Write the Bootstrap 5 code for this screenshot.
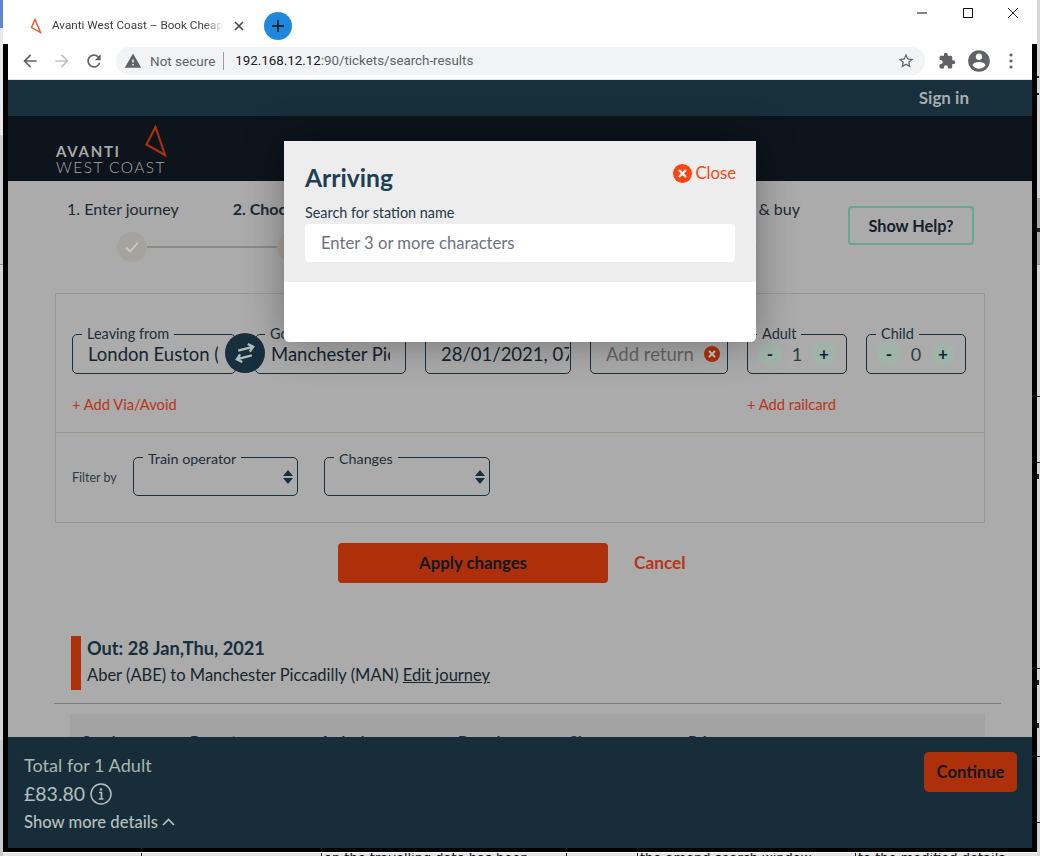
<!DOCTYPE html>
<html lang="en">
<head>
    <meta charset="UTF-8">
    <title>Avanti West Coast – Book Cheap Train Tickets</title>
    <link href="https://cdn.jsdelivr.net/npm/bootstrap@5.3.2/dist/css/bootstrap.min.css" rel="stylesheet">
    <style>
        html, body { height: 856px; overflow: hidden; }
        body { background: #d6d6d6; font-family: Lato, "Open Sans", sans-serif; color: #17303d; }
        .strip { width: 3px; height: 856px; flex: none; display: block; }
        .desk { width: 1040px; height: 856px; }
        .win-col { width: 1034px; flex: none; }
        .win { height: 853px; background: #fff; }

        /* browser chrome */
        .tabstrip { height: 44px; padding-top: 8px; font-family: Roboto, sans-serif; }
        .fav { margin-left: 27px; }
        .tab-title { width: 172px; margin-left: 10px; font-size: 11.7px; color: #3c4043; white-space: nowrap; overflow: hidden;
            -webkit-mask-image: linear-gradient(90deg, #000 88%, transparent); mask-image: linear-gradient(90deg, #000 88%, transparent); }
        .tab-x { margin-left: 10px; }
        .newtab { width: 28px; height: 28px; border-radius: 50%; background: #1e88dc; margin-left: 20px; }
        .winbtns { margin-left: auto; margin-right: 1px; align-self: flex-start; }
        .winbtn { width: 45.5px; text-align: center; line-height: 0; }
        .frame { height: 808px; border: solid #000; border-width: 0 5px 4px 5px; }
        .toolbar { height: 36px; padding: 0 5px 1px 6px; border-bottom: 1px solid #e3e5e8; font-family: Roboto, sans-serif; }
        .tool { width: 32px; flex: none; text-align: center; line-height: 0; }
        .omni { height: 28px; flex: 1; margin: 0 6px; background: #f1f3f4; border-radius: 14px; padding: 0 10px 0 8px; font-size: 13.5px; color: #5f6368; }
        .omni-sep { width: 1px; height: 18px; background: #9aa0a6; margin: 0 11px 0 8px; }
        .url-text { font-size: 13.33px; }
        .url-host { color: #202124; }

        /* page */
        .page { height: 768px; position: relative; overflow: hidden; background: #ababab; }
        .topbar { height: 36px; background: #182f3c; padding-right: 63px; color: #a7adaf; font-weight: 700; font-size: 17px; }
        .brandbar { height: 65px; background: #0d141b; padding-left: 48px; }
        .logo { position: relative; width: 112px; color: #a9a9a9; line-height: 16px; padding-top: 27px; }
        .logo-a { font-weight: 700; font-size: 15px; letter-spacing: 1.7px; }
        .logo-w { font-weight: 300; font-size: 15.5px; letter-spacing: 1.45px; white-space: nowrap; }
        .logo svg { position: absolute; left: 88px; top: 8px; }
        .main { height: 556px; overflow: hidden; padding: 17px 47px 0; }

        .steps { padding: 0 11px 0 12px; }
        .steps-l { width: 733px; }
        .step-labels { font-size: 16px; line-height: 22px; color: #1b2a33; }
        .step-now { font-weight: 700; margin-left: 54px; white-space: nowrap; }
        .step-buy { margin-left: auto; white-space: nowrap; }
        .track { margin: 12px 43px 0 50px; height: 30px; }
        .dot { width: 30px; height: 30px; border-radius: 50%; background: #a6a29d; flex: none; }
        .rail { height: 2px; background: #8f8a85; flex: 1; }
        .rail-a { flex: none; width: 130px; }
        .btn.helpbtn { width: 126px; height: 39px; margin: 8px 0 0 48px; padding: 1px 0 0; border: 2px solid #6aa58f; border-radius: 4px; font-weight: 700; font-size: 16.3px; color: #14222b; background: transparent; }

        .searchbox { border: 1px solid #989890; margin-top: 31px; height: 230px; }
        .sec-a { height: 139px; padding: 32px 16px 0; border-bottom: 1px solid #989890; }
        .sec-b { padding: 14px 16px 0; }
        .fieldrow { position: relative; gap: 19px; height: 48px; }
        .fld { border: 1px solid #17303d; border-radius: 5px; margin: 0; padding: 0; height: 48px; min-width: 0; flex: none; }
        .fld legend { float: none; width: auto; margin: 0 0 0 9px; padding: 0 5px; font-size: 14.5px; line-height: 16px; color: #1b2f3b; }
        .fld-val { font-size: 18.5px; line-height: 24px; padding-left: 15px; white-space: nowrap; overflow: hidden; color: #14252f; }
        .w-from { width: 164px; } .w-to { width: 151px; } .w-date { width: 146px; } .w-ret { width: 138px; } .w-pax { width: 100px; }
        .w-from .fld-val { margin-right: 17px; }
        .w-to .fld-val { margin-right: 15px; }
        .w-date .fld-val { margin-right: 1px; }
        .w-ret .fld-val { color: #666; padding-right: 7px; }
        .swap { position: absolute; left: 153px; top: 7px; width: 40px; height: 40px; border-radius: 50%; background: #18303d; }
        .pax { height: 24px; padding: 0 10px; }
        .pax-btn { width: 24px; height: 24px; border-radius: 50%; background: #a0b4a9; font-weight: 700; font-size: 17px; line-height: 23px; text-align: center; color: #14252f; }
        .pax-n { font-size: 18px; color: #2a3d47; }
        .addlink { font-size: 14.7px; line-height: 20px; color: #b9351a; margin-top: 20px; }
        .add-via { width: 675px; flex: none; }
        .filter-l { width: 61px; font-size: 12.5px; color: #2a3d47; padding-top: 22px; }
        .fld-sel { width: 165px; height: 49px; }
        .fld-sel legend { padding-top: 4px; font-size: 14.3px; }
        .fld-sel + .fld-sel { width: 166px; margin-left: 26px; }
        .sel-in { height: 20px; padding-right: 4px; }

        .applyrow { margin: 20px 0 0 283px; }
        .btn.applybtn { width: 270px; height: 40px; padding: 0; background: #ad300b; border: 0; border-radius: 4px; font-weight: 700; font-size: 16.8px; color: #13181c; }
        .cancel { margin-left: 26px; font-weight: 700; font-size: 17.3px; color: #b9351a; }
        .outrow { margin: 53px 0 0 16px; height: 54px; }
        .outbar { width: 10px; background: #ad300b; margin-right: 6px; }
        .out-h { font-size: 18.2px; font-weight: 700; line-height: 24px; color: #17303d; }
        .out-s { font-size: 16.5px; line-height: 24px; margin-top: 3px; color: #15262f; }
        .out-s a { color: inherit; }
        .rule { height: 1px; background: #7d7d7d; margin: 13px -16px 0 -1px; }
        .fares { margin: 10px 0 0 15px; background: #a3a3a3; padding: 17px 0 0 12px; height: 60px; font-size: 15px; font-weight: 700; line-height: 20px; color: #17303d; }
        .fares span:nth-child(1) { width: 108px; } .fares span:nth-child(2) { width: 130px; } .fares span:nth-child(3) { width: 138px; }
        .fares span:nth-child(4) { width: 110px; } .fares span:nth-child(5) { width: 120px; }

        .totalbar { height: 111px; background: #172d3a; padding: 15px 15px 0 16px; }
        .t-a { font-size: 18.1px; line-height: 26px; color: #a8b8ac; margin-top: 0; }
        .t-b { font-size: 19.5px; line-height: 28px; color: #b6bfbe; margin-top: 2px; gap: 5px; }
        .t-c { font-size: 16.6px; line-height: 24px; color: #b6c0bd; font-weight: 500; margin-top: 2px; }
        .btn.contbtn { width: 93px; height: 40px; padding: 0; background: #ad300b; border: 0; border-radius: 5px; font-weight: 700; font-size: 16.6px; color: #13181c; }

        /* modal */
        .stn-modal { position: absolute; left: 276px; top: 61px; width: 472px; height: 201px; background: #fff; border-radius: 0 0 5px 5px; box-shadow: 0 0 40px rgba(0,0,0,.35); overflow: hidden; }
        .stn-head { background: #ededed; height: 141px; padding: 22px 20px 0 21px; }
        .stn-title { font-size: 24.7px; font-weight: 700; line-height: 30px; color: #1c3f55; }
        .stn-close { font-size: 16.7px; color: #fb4414; line-height: 20px; gap: 3px; margin-right: 0; }
        .stn-label { font-size: 14.4px; line-height: 18px; margin-top: 11px; color: #1f3a4a; }
        .form-control.stn-input { height: 38px; margin-top: 2px; width: 430px; border: 0; border-radius: 3px; padding: 0 16px 1px; font-size: 16.6px; font-family: Lato, sans-serif; }
        .stn-input::placeholder { color: #6c7280; opacity: 1; }

        /* window behind */
        .behind { height: 3px; overflow: hidden; padding-left: 138px; font: 13px/9px "DejaVu Sans", sans-serif; color: #111; white-space: nowrap; background: #e4e4e4; }
        .cell { border-left: 1px solid #222; height: 3px; padding-left: 2px; flex: none; }
        .c-a { width: 180px; } .c-b { width: 245px; } .c-c { width: 71px; } .c-d { width: 218px; } .c-e { width: 180px; }
    </style>
</head>
<body class="m-0">
<div class="desk d-flex">
    <svg class="strip" viewBox="0 0 3 856">
        <rect width="3" height="28" fill="#5f83d9"/><rect y="28" width="3" height="107" fill="#e8e8e8"/>
        <rect y="135" width="3" height="129" fill="#cfcfcf"/><rect y="264" width="3" height="1" fill="#5cb85c"/>
        <rect y="740" width="3" height="116" fill="#c9c9c9"/>
    </svg>
    <div class="win-col">
        <div class="win">
            <div class="tabstrip d-flex align-items-center">
                <svg class="fav" width="12" height="16" viewBox="0 0 12 16"><path d="M5 1.5 10.5 14.5 1.5 9.5Z" fill="none" stroke="#f0502a" stroke-width="1.4"/></svg>
                <div class="tab-title">Avanti West Coast – Book Cheap Train Tickets</div>
                <svg class="tab-x" width="10" height="10" viewBox="0 0 10 10"><path d="M1 1 9 9M9 1 1 9" stroke="#45494d" stroke-width="1.6"/></svg>
                <div class="newtab d-flex align-items-center justify-content-center">
                    <svg width="14" height="14" viewBox="0 0 14 14"><path d="M7 1V13M1 7H13" stroke="#16242e" stroke-width="1.8"/></svg>
                </div>
                <div class="winbtns d-flex">
                    <div class="winbtn"><svg width="10" height="10" viewBox="0 0 10 10"><path d="M0 5H10" stroke="#111"/></svg></div>
                    <div class="winbtn"><svg width="10" height="10" viewBox="0 0 10 10"><rect x=".5" y=".5" width="9" height="9" fill="none" stroke="#111"/></svg></div>
                    <div class="winbtn"><svg width="10" height="10" viewBox="0 0 10 10"><path d="M0 0 10 10M10 0 0 10" stroke="#111" stroke-width=".9"/></svg></div>
                </div>
            </div>
            <div class="frame">
                <div class="toolbar d-flex align-items-center">
                    <div class="tool"><svg width="20" height="20" viewBox="0 0 24 24" fill="#5f6368"><path d="M20 11H7.8l5.6-5.6L12 4l-8 8 8 8 1.4-1.4L7.8 13H20z"/></svg></div>
                    <div class="tool"><svg width="20" height="20" viewBox="0 0 24 24" fill="#bdc1c6"><path d="M4 11h12.2l-5.6-5.6L12 4l8 8-8 8-1.4-1.4 5.6-5.6H4z"/></svg></div>
                    <div class="tool"><svg width="20" height="20" viewBox="0 0 24 24" fill="#5f6368"><path d="M17.65 6.35A7.958 7.958 0 0 0 12 4c-4.42 0-7.99 3.58-7.99 8s3.57 8 7.99 8c3.73 0 6.84-2.55 7.73-6h-2.08A5.99 5.99 0 0 1 12 18c-3.31 0-6-2.69-6-6s2.69-6 6-6c1.66 0 3.14.69 4.22 1.78L13 11h7V4l-2.35 2.35z"/></svg></div>
                    <div class="omni d-flex align-items-center">
                        <svg class="me-2" width="18" height="18" viewBox="0 0 24 24" fill="#5f6368"><path d="M1 21h22L12 2 1 21zm12-3h-2v-2h2v2zm0-4h-2v-4h2v4z"/></svg>
                        <span>Not secure</span><span class="omni-sep"></span>
                        <span class="url-text"><span class="url-host">192.168.12.12</span>:90/tickets/search-results</span>
                        <svg class="ms-auto" width="18" height="18" viewBox="0 0 24 24" fill="#5f6368"><path d="M22 9.24l-7.19-.62L12 2 9.19 8.63 2 9.24l5.46 4.73L5.82 21 12 17.27 18.18 21l-1.63-7.03L22 9.24zM12 15.4l-3.76 2.27 1-4.28-3.32-2.88 4.38-.38L12 6.1l1.71 4.04 4.38.38-3.32 2.88 1 4.28L12 15.4z"/></svg>
                    </div>
                    <div class="tool"><svg width="18" height="18" viewBox="0 0 24 24" fill="#5f6368"><path d="M20.5 11H19V7c0-1.1-.9-2-2-2h-4V3.5C13 2.12 11.88 1 10.5 1S8 2.12 8 3.5V5H4c-1.1 0-1.99.9-1.99 2v3.8H3.5c1.49 0 2.7 1.21 2.7 2.7s-1.21 2.7-2.7 2.7H2V20c0 1.1.9 2 2 2h3.8v-1.5c0-1.49 1.21-2.7 2.7-2.7 1.49 0 2.7 1.21 2.7 2.7V22H17c1.1 0 2-.9 2-2v-4h1.5c1.38 0 2.5-1.12 2.5-2.5S21.88 11 20.5 11z"/></svg></div>
                    <div class="tool"><svg width="26" height="26" viewBox="0 0 24 24" fill="#5f6368"><path d="M12 2C6.48 2 2 6.48 2 12s4.48 10 10 10 10-4.48 10-10S17.52 2 12 2zm0 3c1.66 0 3 1.34 3 3s-1.34 3-3 3-3-1.34-3-3 1.34-3 3-3zm0 14.2c-2.5 0-4.71-1.28-6-3.22.03-1.99 4-3.08 6-3.08 1.99 0 5.97 1.09 6 3.08-1.29 1.94-3.5 3.22-6 3.22z"/></svg></div>
                    <div class="tool"><svg width="4" height="16" viewBox="0 0 4 16" fill="#5f6368"><circle cx="2" cy="2" r="1.6"/><circle cx="2" cy="8" r="1.6"/><circle cx="2" cy="14" r="1.6"/></svg></div>
                </div>

                <div class="page">
                    <div class="topbar d-flex align-items-center justify-content-end">Sign in</div>
                    <div class="brandbar">
                        <div class="logo">
                            <div class="logo-a">AVANTI</div>
                            <div class="logo-w">WEST COAST</div>
                            <svg width="24" height="34" viewBox="0 0 24 34"><path d="M11.5 3 21 31 2.5 20.5Z" fill="none" stroke="#a8300f" stroke-width="2.2"/></svg>
                        </div>
                    </div>

                    <div class="main">
                        <div class="steps d-flex align-items-start">
                            <div class="steps-l">
                                <div class="step-labels d-flex">
                                    <span>1. Enter journey</span>
                                    <span class="step-now">2. Choose ticket</span>
                                    <span class="step-buy">4. Review &amp; buy</span>
                                </div>
                                <div class="track d-flex align-items-center">
                                    <div class="dot d-flex align-items-center justify-content-center">
                                        <svg width="16" height="14" viewBox="0 0 16 14"><path d="M2 7.5 6 11.5 14 2.5" fill="none" stroke="#c9c9c7" stroke-width="1.8"/></svg>
                                    </div>
                                    <div class="rail rail-a"></div>
                                    <div class="dot"></div>
                                    <div class="rail"></div>
                                    <div class="dot"></div>
                                </div>
                            </div>
                            <button type="button" class="btn helpbtn">Show Help?</button>
                        </div>

                        <div class="searchbox">
                            <div class="sec-a">
                                <div class="fieldrow d-flex">
                                    <fieldset class="fld w-from"><legend>Leaving from</legend><div class="fld-val">London Euston (EUS)</div></fieldset>
                                    <fieldset class="fld w-to"><legend>Going to</legend><div class="fld-val">Manchester Piccadilly</div></fieldset>
                                    <fieldset class="fld w-date"><legend>Going on</legend><div class="fld-val">28/01/2021, 07:00</div></fieldset>
                                    <fieldset class="fld w-ret"><legend>Return</legend>
                                        <div class="fld-val d-flex align-items-center justify-content-between">Add return
                                            <svg width="16" height="16" viewBox="0 0 16 16"><circle cx="8" cy="8" r="8" fill="#ad300b"/><path d="M5 5 11 11M11 5 5 11" stroke="#c9c9c7" stroke-width="2"/></svg>
                                        </div>
                                    </fieldset>
                                    <fieldset class="fld w-pax"><legend>Adult</legend>
                                        <div class="pax d-flex align-items-center justify-content-between"><span class="pax-btn">-</span><span class="pax-n">1</span><span class="pax-btn">+</span></div>
                                    </fieldset>
                                    <fieldset class="fld w-pax"><legend>Child</legend>
                                        <div class="pax d-flex align-items-center justify-content-between"><span class="pax-btn">-</span><span class="pax-n">0</span><span class="pax-btn">+</span></div>
                                    </fieldset>
                                    <div class="swap d-flex align-items-center justify-content-center">
                                        <svg width="26" height="24" viewBox="0 0 26 24"><g transform="rotate(-15 13 12)" fill="none" stroke="#b4bdbd" stroke-width="2.4"><path d="M7 8H22M18 4 22.5 8 18 12"/><path d="M19 16H4M8 12 3.5 16 8 20"/></g></svg>
                                    </div>
                                </div>
                                <div class="addlink d-flex"><span class="add-via">+ Add Via/Avoid</span><span>+ Add railcard</span></div>
                            </div>
                            <div class="sec-b d-flex">
                                <div class="filter-l">Filter by</div>
                                <fieldset class="fld fld-sel"><legend>Train operator</legend>
                                    <div class="sel-in d-flex align-items-center justify-content-end">
                                        <svg width="10" height="14" viewBox="0 0 10 14" fill="#17303d"><path d="M5 0 10 6H0ZM0 8H10L5 14Z"/></svg>
                                    </div>
                                </fieldset>
                                <fieldset class="fld fld-sel"><legend>Changes</legend>
                                    <div class="sel-in d-flex align-items-center justify-content-end">
                                        <svg width="10" height="14" viewBox="0 0 10 14" fill="#17303d"><path d="M5 0 10 6H0ZM0 8H10L5 14Z"/></svg>
                                    </div>
                                </fieldset>
                            </div>
                        </div>

                        <div class="applyrow d-flex align-items-center">
                            <button type="button" class="btn applybtn">Apply changes</button>
                            <span class="cancel">Cancel</span>
                        </div>

                        <div class="outrow d-flex">
                            <div class="outbar"></div>
                            <div>
                                <div class="out-h">Out: 28 Jan,Thu, 2021</div>
                                <div class="out-s">Aber (ABE) to Manchester Piccadilly (MAN) <a href="#">Edit journey</a></div>
                            </div>
                        </div>
                        <div class="rule"></div>
                        <div class="fares d-flex">
                            <span>Service</span><span>Depart</span><span>Arrival</span><span>Duration</span><span>Changes</span><span>Price</span>
                        </div>
                    </div>

                    <div class="totalbar d-flex justify-content-between align-items-start">
                        <div>
                            <div class="t-a">Total for 1 Adult</div>
                            <div class="t-b d-flex align-items-center">£83.80
                                <svg width="22" height="22" viewBox="0 0 22 22"><circle cx="11" cy="11" r="10" fill="none" stroke="#b6bfbe" stroke-width="1.5"/><circle cx="11" cy="6.5" r="1.3" fill="#b6bfbe"/><path d="M9 9.5H11.5V15.5M8.8 16H13.4" fill="none" stroke="#b6bfbe" stroke-width="1.6"/></svg>
                            </div>
                            <div class="t-c d-flex align-items-center gap-1">Show more details
                                <svg width="13" height="8" viewBox="0 0 13 8"><path d="M1 7 6.5 1.5 12 7" fill="none" stroke="#b6c0bd" stroke-width="1.6"/></svg>
                            </div>
                        </div>
                        <button type="button" class="btn contbtn">Continue</button>
                    </div>

                    <div class="stn-modal">
                        <div class="stn-head">
                            <div class="d-flex justify-content-between align-items-start">
                                <div class="stn-title">Arriving</div>
                                <div class="stn-close d-flex align-items-center">
                                    <svg width="19" height="19" viewBox="0 0 19 19"><circle cx="9.5" cy="9.5" r="9.5" fill="#fb4414"/><path d="M6 6 13 13M13 6 6 13" stroke="#fff" stroke-width="2.2"/></svg>
                                    Close
                                </div>
                            </div>
                            <div class="stn-label">Search for station name</div>
                            <input type="text" class="form-control stn-input" placeholder="Enter 3 or more characters">
                        </div>
                    </div>
                </div>
            </div>
        </div>
        <div class="behind d-flex">
            <div class="cell c-a"></div>
            <div class="cell c-b">on the travelling date has been</div>
            <div class="cell c-c"></div>
            <div class="cell c-d">the amend search window</div>
            <div class="cell c-e">to the modified details</div>
        </div>
    </div>
    <svg class="strip" viewBox="0 0 3 856">
        <rect y="198" width="3" height="66" fill="#a8a8a8"/><rect y="264" width="3" height="1" fill="#5cb85c"/>
        <g fill="#222"><rect y="76" width="2" height="2"/><rect y="93" width="2" height="2"/><rect y="228" width="3" height="4"/><rect y="396" width="3" height="1"/><rect y="462" width="3" height="1"/><rect y="474" width="2" height="5"/><rect y="668" width="3" height="1"/><rect y="680" width="2" height="5"/><rect y="723" width="2" height="5"/><rect y="756" width="3" height="1"/><rect y="822" width="3" height="1"/></g>
    </svg>
</div>
</body>
</html>
